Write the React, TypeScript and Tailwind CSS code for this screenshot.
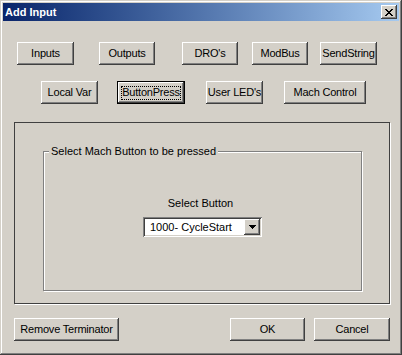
const raised =
  "shadow-[inset_-1px_-1px_#404040,inset_1px_1px_#ffffff,inset_-2px_-2px_#808080,inset_2px_2px_#d4d0c8]";

function Btn({ label, cls }: { label: string; cls: string }) {
  return (
    <div className={`h-[23px] flex items-center justify-center bg-[#d4d0c8] text-black tracking-[-0.2px] ${raised} ${cls}`}>
      {label}
    </div>
  );
}

function DefaultBtn({ label, cls }: { label: string; cls: string }) {
  return (
    <div className={`h-[23px] border border-black bg-[#d4d0c8] tracking-[-0.2px] ${cls}`}>
      <div className={`relative h-full flex items-center justify-center ${raised}`}>
        <div className="absolute inset-x-[3px] top-[4px] bottom-[3px] border border-dotted border-black" />
        {label}
      </div>
    </div>
  );
}

export default function App() {
  return (
    <div
      className="w-[402px] h-[355px] bg-[#d4d0c8] p-[3px] flex flex-col text-[11px] text-black shadow-[inset_-1px_-1px_#404040,inset_1px_1px_#d4d0c8,inset_-2px_-2px_#808080,inset_2px_2px_#ffffff]"
      style={{ fontFamily: '"Liberation Sans", Arial, sans-serif' }}
    >
      {/* title bar */}
      <div className="h-[18px] flex items-center justify-between bg-linear-to-r from-[#0a246a] to-[#a6caf0]">
        <span className="pl-[2px] font-bold text-white text-[11px]">Add Input</span>
        <div className={`w-[16px] h-[14px] mr-[2px] bg-[#d4d0c8] flex items-center justify-center ${raised}`}>
          <svg width="8" height="7" viewBox="0 0 8 7" shapeRendering="crispEdges">
            <path d="M0 0h2v1h-2zM6 0h2v1h-2zM1 1h2v1h-2zM5 1h2v1h-2zM2 2h4v1h-4zM3 3h2v1h-2zM2 4h4v1h-4zM1 5h2v1h-2zM5 5h2v1h-2zM0 6h2v1h-2zM6 6h2v1h-2z" fill="#000" />
          </svg>
        </div>
      </div>

      {/* row 1 */}
      <div className="flex mt-[21px]">
        <Btn label="Inputs" cls="ml-[14px] w-[57px]" />
        <Btn label="Outputs" cls="ml-[25px] w-[56px]" />
        <Btn label="DRO's" cls="ml-[27px] w-[56px]" />
        <Btn label="ModBus" cls="ml-[14px] w-[56px]" />
        <Btn label="SendString" cls="ml-[12px] w-[57px]" />
      </div>

      {/* row 2 */}
      <div className="flex mt-[16px]">
        <Btn label="Local Var" cls="ml-[38px] w-[57px]" />
        <DefaultBtn label="ButtonPress" cls="ml-[19px] w-[68px]" />
        <Btn label="User LED's" cls="ml-[21px] w-[57px]" />
        <Btn label="Mach Control" cls="ml-[21px] w-[82px]" />
      </div>

      {/* panel */}
      <div className="ml-[11px] mt-[18px] w-[376px] h-[182px] border border-[#404040] shadow-[1px_1px_#ffffff]">
        <div className="relative ml-[28px] mt-[28px] w-[319px] h-[140px] border border-[#808080] shadow-[1px_1px_#ffffff,inset_1px_1px_#ffffff] flex flex-col items-center">
          <span className="absolute left-[5px] -top-[8px] px-[2px] bg-[#d4d0c8] leading-[14px]">
            Select Mach Button to be pressed
          </span>
          <div className="mt-[45px] leading-[13px] pr-[4px]">Select Button</div>
          <div className="mt-[7px] w-[119px] h-[20px] bg-white flex items-center p-[2px] shadow-[inset_1px_1px_#808080,inset_-1px_-1px_#ffffff,inset_2px_2px_#404040,inset_-2px_-2px_#d4d0c8]">
            <span className="flex-1 pl-[5px] leading-[16px]">1000- CycleStart</span>
            <div className={`w-[16px] h-[16px] bg-[#d4d0c8] flex items-center justify-center ${raised}`}>
              <svg width="7" height="4" viewBox="0 0 7 4" shapeRendering="crispEdges">
                <path d="M0 0h7v1h-7zM1 1h5v1h-5zM2 2h3v1h-3zM3 3h1v1h-1z" fill="#000" />
              </svg>
            </div>
          </div>
        </div>
      </div>

      {/* bottom buttons */}
      <div className="flex mt-[14px]">
        <Btn label="Remove Terminator" cls="ml-[11px] w-[105px]" />
        <Btn label="OK" cls="ml-[111px] w-[75px]" />
        <Btn label="Cancel" cls="ml-[9px] w-[76px]" />
      </div>
    </div>
  );
}
